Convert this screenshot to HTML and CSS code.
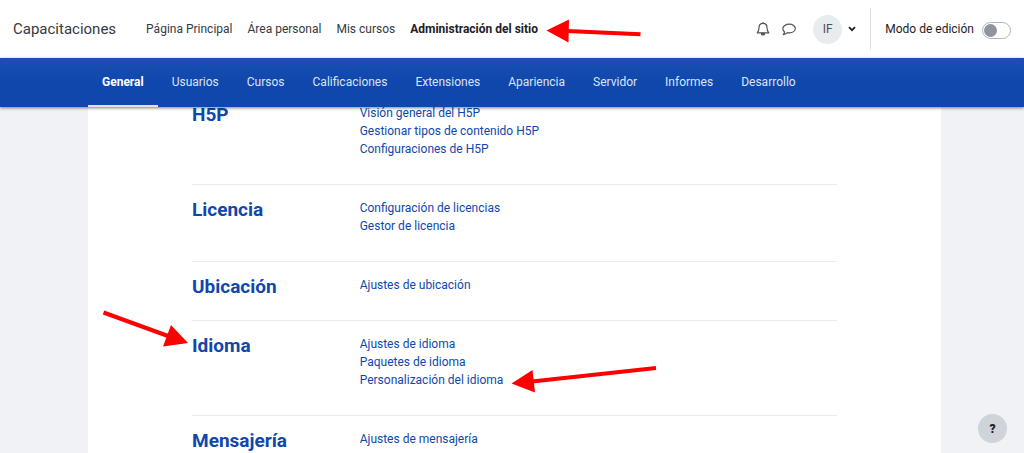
FILE: index.html
```html
<!DOCTYPE html>
<html lang="es">
<head>
<meta charset="utf-8">
<meta name="viewport" content="width=device-width, initial-scale=1">
<title>Administración del sitio</title>
<link rel="stylesheet" href="styles.css">
</head>
<body>
<header class="topbar">
  <a class="brand" href="#">Capacitaciones</a>
  <nav class="primary" aria-label="Principal">
    <a href="#">Página Principal</a>
    <a href="#">Área personal</a>
    <a href="#">Mis cursos</a>
    <a class="current" href="#">Administración del sitio</a>
  </nav>
  <div class="tools">
    <button class="icon-btn" type="button" aria-label="Notificaciones">
      <svg width="14" height="16" viewBox="0 0 14 16" fill="none" stroke="#50555a" stroke-width="1.2" stroke-linejoin="round"><path d="M7 1v1.3M1.2 11.8C2.6 10.4 3 9 3 6.800C3 4.200 4.500 2.400 7 2.400S11 4.200 11 6.800C11 9 11.400 10.400 12.800 11.800Z"/><path d="M5.400 12.400a1.600 1.600 0 0 0 3.200 0Z" fill="#50555a"/></svg>
    </button>
    <button class="icon-btn" type="button" aria-label="Mensajes">
      <svg width="14" height="13" viewBox="0 0 14 13" fill="none" stroke="#50555a" stroke-width="1.200" stroke-linejoin="round"><path d="M7.300 1.200C10.800 1.200 13.300 3 13.300 5.500S10.800 9.900 7.300 9.900C6.600 9.900 6 9.800 5.400 9.700C4.300 10.800 2.700 11.500 1.200 11.600C2 10.800 2.500 9.900 2.600 8.900C1.500 8.100 .8 6.900 .8 5.500C.8 3 3.800 1.200 7.300 1.200Z"/></svg>
    </button>
    <button class="user" type="button" aria-label="Menú de usuario">
      <span class="avatar">IF</span>
      <svg width="8" height="6" viewBox="0 0 8 6" fill="none" stroke="#1d2125" stroke-width="1.800"><path d="M1 1.200L4 4.200L7 1.200"/></svg>
    </button>
    <div class="edit">
      <label for="edit-mode">Modo de edición</label>
      <input class="switch" id="edit-mode" type="checkbox">
    </div>
  </div>
</header>
<nav class="secondary" aria-label="Administración">
  <a class="active" href="#">General</a>
  <a href="#">Usuarios</a>
  <a href="#">Cursos</a>
  <a href="#">Calificaciones</a>
  <a href="#">Extensiones</a>
  <a href="#">Apariencia</a>
  <a href="#">Servidor</a>
  <a href="#">Informes</a>
  <a href="#">Desarrollo</a>
</nav>
<main class="page">
  <section class="group">
    <h2><a href="#">H5P</a></h2>
    <ul>
      <li><a href="#">Visión general del H5P</a></li>
      <li><a href="#">Gestionar tipos de contenido H5P</a></li>
      <li><a href="#">Configuraciones de H5P</a></li>
    </ul>
  </section>
  <section class="group">
    <h2><a href="#">Licencia</a></h2>
    <ul>
      <li><a href="#">Configuración de licencias</a></li>
      <li><a href="#">Gestor de licencia</a></li>
    </ul>
  </section>
  <section class="group">
    <h2><a href="#">Ubicación</a></h2>
    <ul>
      <li><a href="#">Ajustes de ubicación</a></li>
    </ul>
  </section>
  <section class="group">
    <h2><a href="#">Idioma</a></h2>
    <ul>
      <li><a href="#">Ajustes de idioma</a></li>
      <li><a href="#">Paquetes de idioma</a></li>
      <li><a href="#">Personalización del idioma</a></li>
    </ul>
  </section>
  <section class="group">
    <h2><a href="#">Mensajería</a></h2>
    <ul>
      <li><a href="#">Ajustes de mensajería</a></li>
    </ul>
  </section>
</main>
<button class="help" type="button" aria-label="Ayuda">?</button>
<svg class="arrows" width="1024" height="453" viewBox="0 0 1024 453" aria-hidden="true">
  <g stroke="#f00" stroke-width="4" fill="none"><path d="M640.500 34.200L567 31"/><path d="M103.500 312.500L168 336"/><path d="M656 368L532 381.500"/></g>
  <g fill="#f00"><path d="M546.500 30.500L569 19.500L568.500 42.500Z"/><path d="M188 343L171 325L163 346.500Z"/><path d="M511.500 383.500L532.500 370L535 392.500Z"/></g>
</svg>
</body>
</html>
```

FILE: styles.css
```css
* { box-sizing: border-box; }

body {
  margin: 0;
  min-height: 100vh;
  display: flex;
  flex-direction: column;
  background: #f0f2f6;
  color: #1d2125;
  font: 12px/18px Roboto, "Liberation Sans", sans-serif;
}

a { color: inherit; text-decoration: none; }
button { border: 0; padding: 0; background: none; font: inherit; color: inherit; cursor: pointer; }

.topbar {
  flex: none;
  display: flex;
  align-items: center;
  height: 58px;
  padding: 0 13px;
  background: #fff;
}
.brand { font-size: 15px; margin-right: 30px; color: #343a40; }
.primary { display: flex; gap: 15px; color: #343a40; }
.primary .current { font-weight: 700; color: #1d2125; }

.tools { display: flex; align-items: center; margin-left: auto; }
.icon-btn { display: flex; margin-right: 12px; }
.user { display: flex; align-items: center; gap: 6px; margin-left: 5px; color: #495057; }
.avatar {
  display: grid;
  place-items: center;
  width: 29px;
  height: 29px;
  border-radius: 50%;
  background: #e9ecef;
}
.edit {
  display: flex;
  align-items: center;
  gap: 8px;
  height: 42px;
  margin-left: 14px;
  padding-left: 14px;
  border-left: 1px solid #dee2e6;
}
.switch {
  appearance: none;
  display: flex;
  align-items: center;
  width: 29px;
  height: 17px;
  margin: 2px 0 0;
  padding: 0 1px;
  border: 1px solid #adb5bd;
  border-radius: 9px;
  background: #fff;
}
.switch::before {
  content: "";
  width: 13px;
  height: 13px;
  border-radius: 50%;
  background: #8f959e;
}
.switch:checked { justify-content: flex-end; }

.secondary {
  flex: none;
  position: relative;
  z-index: 1;
  display: flex;
  height: 49px;
  padding: 0 88px;
  background: linear-gradient(#1b50b2, #0f47ad 50%);
  box-shadow: 0 1px 3px rgba(0, 0, 0, .5);
  color: #dbe4f5;
}
.secondary a {
  display: flex;
  align-items: center;
  padding: 0 14px;
  border-bottom: 2px solid transparent;
}
.secondary .active { font-weight: 700; color: #fff; border-color: #dee2e6; }

.page {
  flex: 1 0 auto;
  margin: -17px 83px 0 88px;
  padding: 0 104px;
  background: #fff;
}
.group {
  display: grid;
  grid-template-columns: 26% 1fr;
  padding-top: 13px;
  border-bottom: 1px solid #e9ecef;
  color: #0f47ad;
}
.group h2 { margin: 0; font-size: 19px; line-height: 24px; font-weight: 700; }
.group ul { margin: 0; padding: 1px 0 26px; list-style: none; }
.group:last-child { border-bottom: 0; }
.group:last-child ul { padding-bottom: 0; }

.help {
  position: fixed;
  right: 17px;
  bottom: 10px;
  z-index: 2;
  width: 29px;
  height: 29px;
  border-radius: 50%;
  background: #ced4da;
  font-weight: 900;
}
.arrows { position: absolute; top: 0; left: 0; z-index: 3; pointer-events: none; }
```
